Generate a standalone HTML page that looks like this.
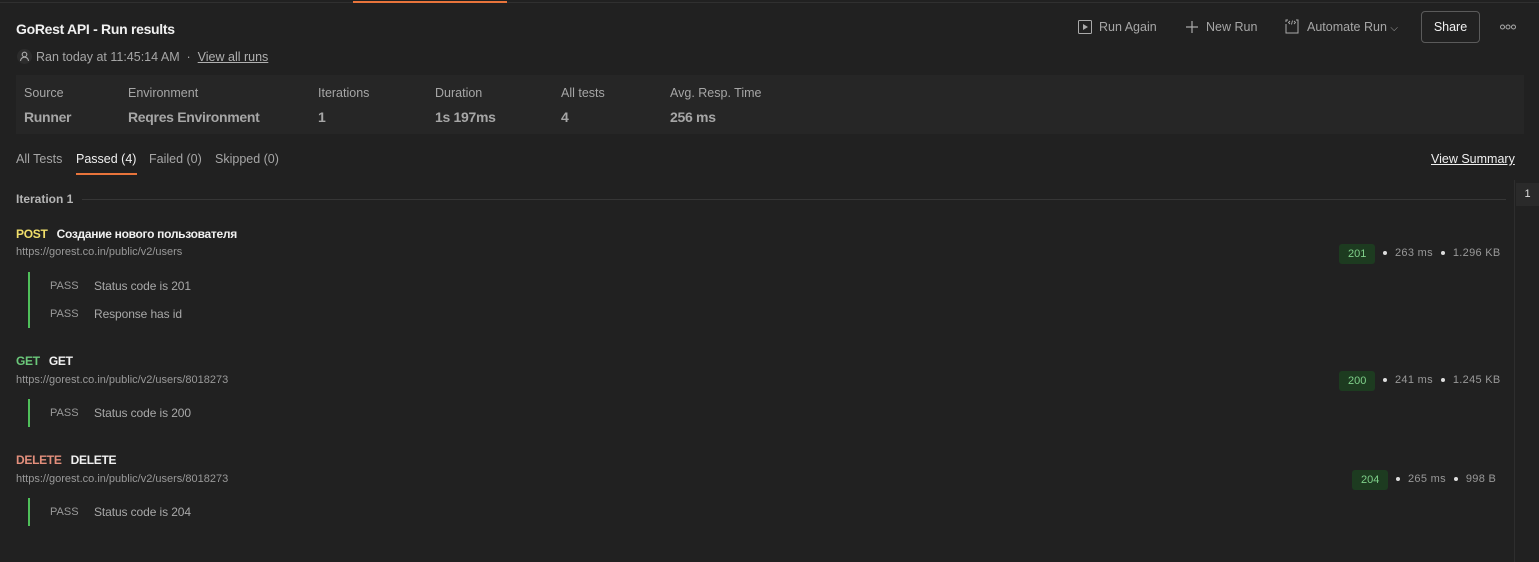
<!DOCTYPE html>
<html><head><meta charset="utf-8"><style>
*{margin:0;padding:0;box-sizing:border-box}
body{width:1539px;height:562px;background:#212121;font-family:"Liberation Sans","Noto Sans CJK SC",sans-serif;color:#a6a6a6;position:relative;overflow:hidden;font-size:12px}
.a{position:absolute;white-space:nowrap}
.w{color:#f0f0f0}
.pass{font-size:11px;color:#9a9a9a}
.t{font-size:12px;color:#a8a8a8;letter-spacing:-0.1px}
.bar{position:absolute;left:28px;width:2px;background:#4fbf5a}
.badge{position:absolute;background:#1d3b20;color:#7fd08a;border-radius:3px;height:20px;line-height:20px;padding:0 9px;font-size:11px}
.dot{display:inline-block;width:4px;height:4px;border-radius:50%;background:#ddd;vertical-align:middle;margin:0 7px}
.b{letter-spacing:-0.3px}
</style></head><body>
<div class="a" style="left:0;top:2px;width:1539px;height:1px;background:#303030"></div>
<div class="a" style="left:353px;top:1px;width:154px;height:2px;background:#e8743b"></div>
<div class="a w b" style="left:16px;top:21px;font-size:14px;font-weight:bold">GoRest API - Run results</div>
<svg class="a" style="left:17px;top:49px" width="15" height="15" viewBox="0 0 15 15"><circle cx="7.5" cy="7.5" r="7.5" fill="#2c2c2c"/><circle cx="7.5" cy="5.5" r="2.3" fill="none" stroke="#aaa" stroke-width="1.1"/><path d="M3.5 12c0-2.5 2-3.8 4-3.8s4 1.3 4 3.8" fill="none" stroke="#aaa" stroke-width="1.1"/></svg>
<div class="a" style="left:36px;top:50px;font-size:12.5px;color:#a6a6a6">Ran today at 11:45:14 AM &nbsp;·&nbsp; <span style="text-decoration:underline;color:#b0b0b0">View all runs</span></div>

<svg class="a" style="left:1078px;top:20px" width="14" height="14"><rect x="0.5" y="0.5" width="13" height="13" rx="1" fill="none" stroke="#aaa"/><path d="M5 4l5 3-5 3z" fill="#aaa"/></svg>
<div class="a" style="left:1099px;top:20px;font-size:12.5px">Run Again</div>
<svg class="a" style="left:1185px;top:20px" width="14" height="14"><path d="M7 1v12M1 7h12" stroke="#aaa" stroke-width="1.2"/></svg>
<div class="a" style="left:1206px;top:20px;font-size:12.5px">New Run</div>
<svg class="a" style="left:1285px;top:19px" width="14" height="15"><path d="M1 5v9h12V1h-2M1 3V1h2" fill="none" stroke="#aaa"/><path d="M5 2l-1.5 1.5L5 5M9 2l1.5 1.5L9 5M7.5 1.5l-1 4" fill="none" stroke="#aaa" stroke-width=".9"/></svg>
<div class="a" style="left:1307px;top:20px;font-size:12.5px">Automate Run <span style="font-size:10px">⌵</span></div>
<div class="a" style="left:1421px;top:11px;width:59px;height:32px;border:1px solid #5a5a5a;border-radius:4px;color:#f0f0f0;font-size:12.5px;text-align:center;line-height:30px">Share</div>
<svg class="a" style="left:1500px;top:24px" width="16" height="6"><circle cx="2.5" cy="3" r="2" fill="none" stroke="#aaa"/><circle cx="8" cy="3" r="2" fill="none" stroke="#aaa"/><circle cx="13.5" cy="3" r="2" fill="none" stroke="#aaa"/></svg>

<div class="a" style="left:16px;top:75px;width:1508px;height:59px;background:#262626"></div>
<div class="a" style="left:24px;top:86px;font-size:12.5px">Source</div>
<div class="a b" style="left:24px;top:109px;font-size:14px;font-weight:bold">Runner</div>
<div class="a" style="left:128px;top:86px;font-size:12.5px">Environment</div>
<div class="a b" style="left:128px;top:109px;font-size:14px;font-weight:bold">Reqres Environment</div>
<div class="a" style="left:318px;top:86px;font-size:12.5px">Iterations</div>
<div class="a b" style="left:318px;top:109px;font-size:14px;font-weight:bold">1</div>
<div class="a" style="left:435px;top:86px;font-size:12.5px">Duration</div>
<div class="a b" style="left:435px;top:109px;font-size:14px;font-weight:bold">1s 197ms</div>
<div class="a" style="left:561px;top:86px;font-size:12.5px">All tests</div>
<div class="a b" style="left:561px;top:109px;font-size:14px;font-weight:bold">4</div>
<div class="a" style="left:670px;top:86px;font-size:12.5px">Avg. Resp. Time</div>
<div class="a b" style="left:670px;top:109px;font-size:14px;font-weight:bold">256 ms</div>

<div class="a" style="left:16px;top:152px;font-size:12.5px">All Tests</div>
<div class="a w" style="left:76px;top:152px;font-size:12.5px">Passed (4)</div>
<div class="a" style="left:76px;top:173px;width:61px;height:2px;background:#e8743b"></div>
<div class="a" style="left:149px;top:152px;font-size:12.5px">Failed (0)</div>
<div class="a" style="left:215px;top:152px;font-size:12.5px">Skipped (0)</div>
<div class="a w" style="left:1431px;top:152px;font-size:12.5px;text-decoration:underline">View Summary</div>

<div class="a" style="left:1514px;top:180px;width:1px;height:382px;background:#2e2e2e"></div>
<div class="a" style="left:1516px;top:183px;width:23px;height:23px;background:#2a2a2a;color:#ddd;font-size:11px;text-align:center;line-height:23px">1</div>

<div class="a" style="left:16px;top:192px;font-size:12px;font-weight:bold;color:#b5b5b5">Iteration 1</div>
<div class="a" style="left:82px;top:199px;width:1424px;height:1px;background:#363636"></div>

<div class="a b" style="left:16px;top:227px;font-size:12px;font-weight:bold"><span style="color:#f0de6a">POST</span>&nbsp;&nbsp; <span class="w">Создание нового пользователя</span></div>
<div class="a" style="left:16px;top:246px;font-size:11px;color:#999">https://gorest.co.in/public/v2/users</div>
<div class="bar" style="top:272px;height:56px"></div>
<div class="a pass" style="left:50px;top:280px">PASS</div><div class="a t" style="left:94px;top:279px">Status code is 201</div>
<div class="a pass" style="left:50px;top:308px">PASS</div><div class="a t" style="left:94px;top:307px">Response has id</div>
<div class="badge" style="left:1339px;top:244px">201</div>
<div class="a" style="left:1375px;top:247px;font-size:11px;color:#999;letter-spacing:0.3px"><span class="dot" style="margin:0 8px"></span>263 ms<span class="dot" style="margin:0 8px"></span>1.296 KB</div>

<div class="a b" style="left:16px;top:354px;font-size:12px;font-weight:bold"><span style="color:#6bc77a">GET</span>&nbsp;&nbsp; <span class="w">GET</span></div>
<div class="a" style="left:16px;top:374px;font-size:11px;color:#999">https://gorest.co.in/public/v2/users/8018273</div>
<div class="bar" style="top:399px;height:28px"></div>
<div class="a pass" style="left:50px;top:407px">PASS</div><div class="a t" style="left:94px;top:406px">Status code is 200</div>
<div class="badge" style="left:1339px;top:371px">200</div>
<div class="a" style="left:1375px;top:374px;font-size:11px;color:#999;letter-spacing:0.3px"><span class="dot" style="margin:0 8px"></span>241 ms<span class="dot" style="margin:0 8px"></span>1.245 KB</div>

<div class="a b" style="left:16px;top:453px;font-size:12px;font-weight:bold"><span style="color:#e38f7c">DELETE</span>&nbsp;&nbsp; <span class="w">DELETE</span></div>
<div class="a" style="left:16px;top:473px;font-size:11px;color:#999">https://gorest.co.in/public/v2/users/8018273</div>
<div class="bar" style="top:498px;height:28px"></div>
<div class="a pass" style="left:50px;top:506px">PASS</div><div class="a t" style="left:94px;top:505px">Status code is 204</div>
<div class="badge" style="left:1352px;top:470px">204</div>
<div class="a" style="left:1388px;top:473px;font-size:11px;color:#999;letter-spacing:0.3px"><span class="dot" style="margin:0 8px"></span>265 ms<span class="dot" style="margin:0 8px"></span>998 B</div>
</body></html>
